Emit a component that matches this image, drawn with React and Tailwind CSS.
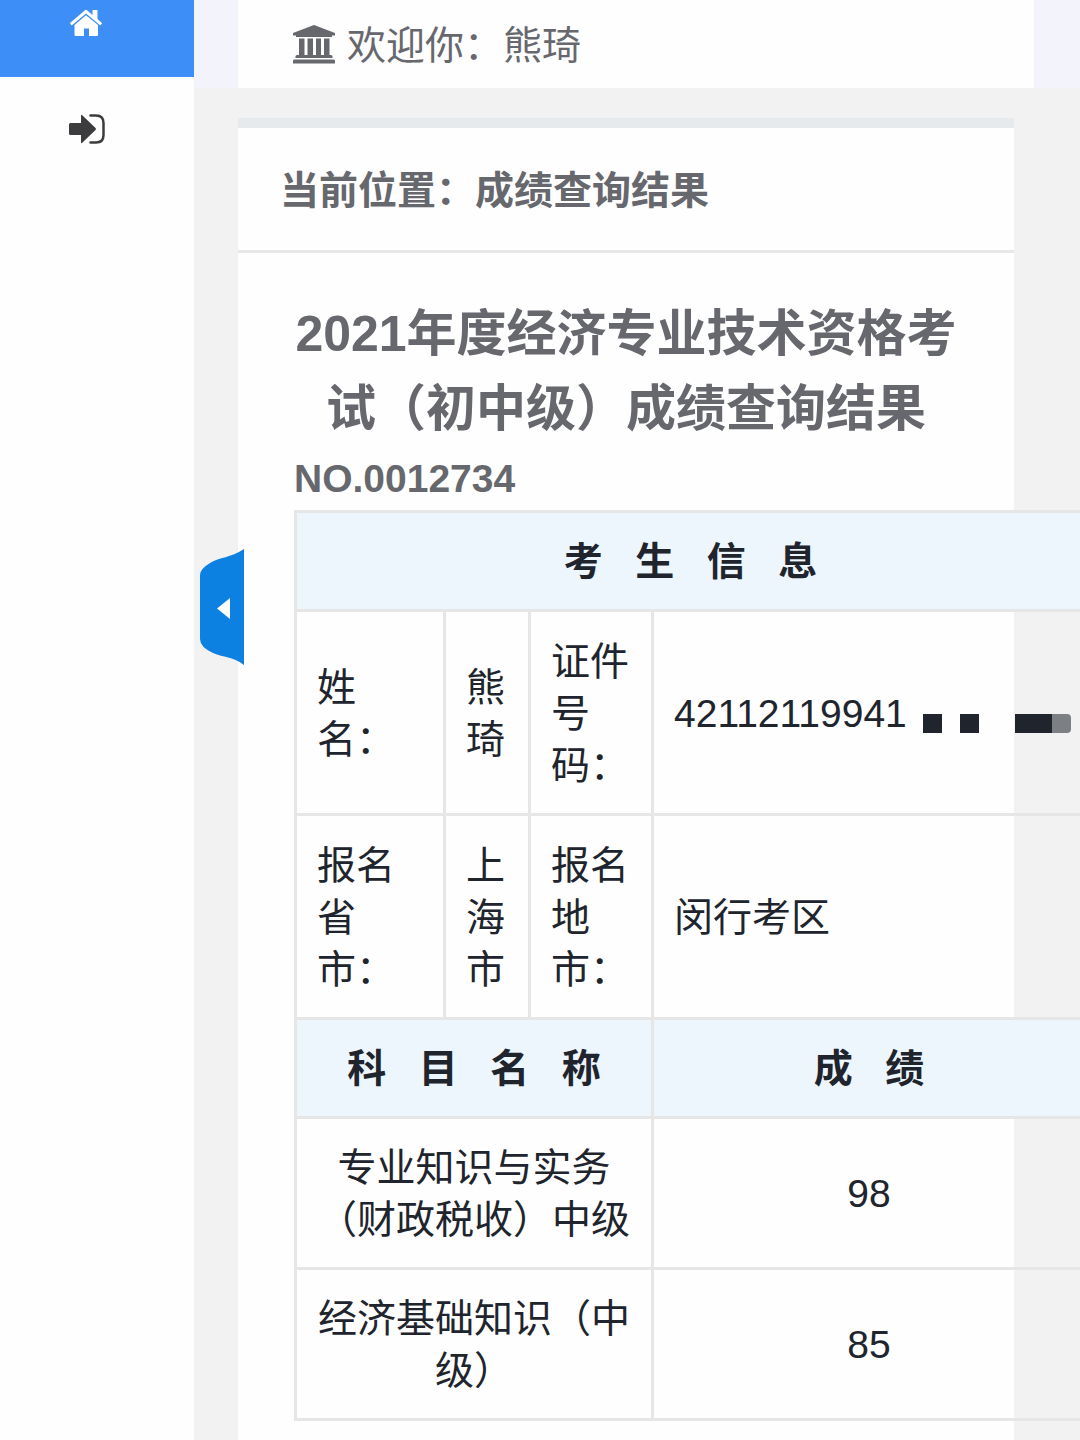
import { useState } from "react";

const subjects = [
  { name: "专业知识与实务（财政税收）中级", score: 98 },
  { name: "经济基础知识（中级）", score: 85 },
];

// Non-breaking spaces keep spread headings on one line
const spread = (text) => text.split("").join("\u00a0\u00a0\u00a0");

const infoCell = "border-[3px] border-[#e6e6e6] px-5 pt-6 pb-[21px]";
const scoreCell = "border-[3px] border-[#e6e6e6] px-5 pt-[23px] pb-[21px]";
const headCell = "border-[3px] border-[#e6e6e6] bg-[#edf5fd] px-5 pt-[23px] pb-[21px] font-bold";

function HomeIcon() {
  return (
    <svg className="h-7 w-8" viewBox="0 0 32 28" fill="currentColor" aria-hidden="true">
      <path d="M15 1.300Q16 .400 17 1.300L22.500 6V1.500q0-.5.500-.5h4q.5 0 .5.500V10l4.200 3.700q.5.500 0 1l-1 1.200q-.5.500-1 0L16 4.600 2.300 15.900q-.5.500-1 0l-1-1.200q-.5-.5 0-1Z" />
      <path d="M16 6.200 28 16v10q0 1-1 1h-8v-7.500h-5V27H5.500q-1 0-1-1V16Z" />
    </svg>
  );
}

function SignInIcon() {
  return (
    <svg className="h-[30px] w-9" viewBox="0 0 36 30" aria-hidden="true">
      <path
        d="M1.500 9H12V2q0-2 1.500-.5L26.500 14q1 1 0 2L13.500 28.500Q12 30 12 28v-7H1.500Q0 21 0 19.500v-9Q0 9 1.500 9Z"
        fill="currentColor"
      />
      <path
        d="M21.500 1.500H27q7.500 0 7.500 7.500v12q0 7.500-7.500 7.500h-5.500"
        fill="none"
        stroke="currentColor"
        strokeWidth="2.500"
        strokeLinecap="round"
      />
    </svg>
  );
}

function BankIcon() {
  return (
    <svg className="h-10 w-[42px]" viewBox="0 0 42 40" fill="currentColor" aria-hidden="true">
      <path d="M21 1 42 9v2.500h-3V13H3v-1.500H0V9Z" />
      <path d="M6 14.500h5.500V31h3V14.500H20V31h3V14.500h5V31h3V14.500h5.500V31H38q1.500 0 1.500 1.500v1.500h-37v-1.500Q2.500 31 4 31h2Z" />
      <path d="M1.500 35.500h39Q42 35.500 42 37v2.500H0V37q0-1.500 1.500-1.500Z" />
    </svg>
  );
}

// Hidden digits of the certificate number
function Mask() {
  return (
    <span className="mb-[7px] ml-4 flex" aria-hidden="true">
      <span className="mr-[18px] h-[19px] w-[19px] bg-[#20242d]" />
      <span className="mr-9 h-[19px] w-[19px] bg-[#20242d]" />
      <span className="h-[19px] w-[37px] bg-[#20242d]" />
      <span className="h-[19px] w-[19px] rounded-r-sm bg-[#7c7f84]" />
    </span>
  );
}

function Sidebar() {
  return (
    <nav className="flex w-[194px] shrink-0 flex-col bg-[#fefefe]">
      <a href="#home" aria-label="首页" className="flex h-[77px] justify-center bg-[#3e8ef7] pt-[9px] pr-[22px] text-white">
        <HomeIcon />
      </a>
      <a href="#logout" aria-label="退出" className="flex h-[77px] justify-center pt-[37px] pr-5 text-[#3c3c3e]">
        <SignInIcon />
      </a>
    </nav>
  );
}

function ResultTable() {
  return (
    <table className="w-[793px] table-fixed border-collapse text-[39px] leading-[52px] text-[#20242d]">
      <colgroup>
        <col className="w-[149px]" />
        <col className="w-[85px]" />
        <col className="w-[123px]" />
        <col />
      </colgroup>
      <tbody>
        <tr>
          <th colSpan={4} className={headCell}>{spread("考生信息")}</th>
        </tr>
        <tr>
          <td className={infoCell}>姓名：</td>
          <td className={infoCell}>熊琦</td>
          <td className={infoCell}>证件号码：</td>
          <td className={infoCell}>
            <div className="flex items-end whitespace-nowrap">
              42112119941
              <Mask />
            </div>
          </td>
        </tr>
        <tr>
          <td className={infoCell}>报名省市：</td>
          <td className={infoCell}>上海市</td>
          <td className={infoCell}>报名地市：</td>
          <td className={infoCell}>闵行考区</td>
        </tr>
        <tr>
          <th colSpan={3} className={headCell}>{spread("科目名称")}</th>
          <th className={headCell}>{spread("成绩")}</th>
        </tr>
        {subjects.map((subject) => (
          <tr key={subject.name} className="text-center">
            <td colSpan={3} className={scoreCell}>{subject.name}</td>
            <td className={scoreCell}>{subject.score}</td>
          </tr>
        ))}
      </tbody>
    </table>
  );
}

function App() {
  const [open, setOpen] = useState(true);

  return (
    <div className="flex min-h-screen overflow-hidden bg-[#f2f2f2] font-['Liberation_Sans','Noto_Sans_CJK_SC',sans-serif] text-[#66686d]">
      {open && <Sidebar />}

      <div className="relative flex min-w-0 flex-1 flex-col">
        <header className="bg-[#f3f4fb] pr-[46px] pl-11">
          <div className="flex h-[88px] items-center gap-3 bg-[#fefefe] pl-[55px] text-[39px]">
            <BankIcon />
            <span className="pt-1">欢迎你：熊琦</span>
          </div>
        </header>

        <main className="flex flex-1 flex-col pt-[30px] pr-[66px] pl-11">
          <section className="flex-1 border-t-[10px] border-[#e7eaed] bg-[#fefefe]">
            <div className="border-b-[3px] border-[#e8e8e8] px-[42px] pt-[37px] pb-[33px] text-[39px] leading-[52px] font-bold">
              当前位置：成绩查询结果
            </div>
            <div className="px-14 pt-11 pb-5">
              <h1 className="text-center text-[50px] leading-[75px] font-bold">
                2021年度经济专业技术资格考试（初中级）成绩查询结果
              </h1>
              <p className="text-[39px] leading-[63px] font-bold">NO.0012734</p>
              <ResultTable />
            </div>
          </section>
        </main>

        {/* Sidebar toggle, sits over the edge of the card */}
        <button
          type="button"
          aria-label="收起菜单"
          onClick={() => setOpen(!open)}
          className="absolute top-[549px] left-1.5 cursor-pointer"
        >
          <svg className="h-[116px] w-11" viewBox="0 0 44 116" aria-hidden="true">
            <path d="M44 0V116C32 107 24 109 13 104Q0 98 0 90V26Q0 20 10 14C20 8 30 9 44 0Z" fill="#0d81e2" />
            <path d="M30 49v21L17 59.500Z" fill="#fefefe" />
          </svg>
        </button>
      </div>
    </div>
  );
}

export default App;
